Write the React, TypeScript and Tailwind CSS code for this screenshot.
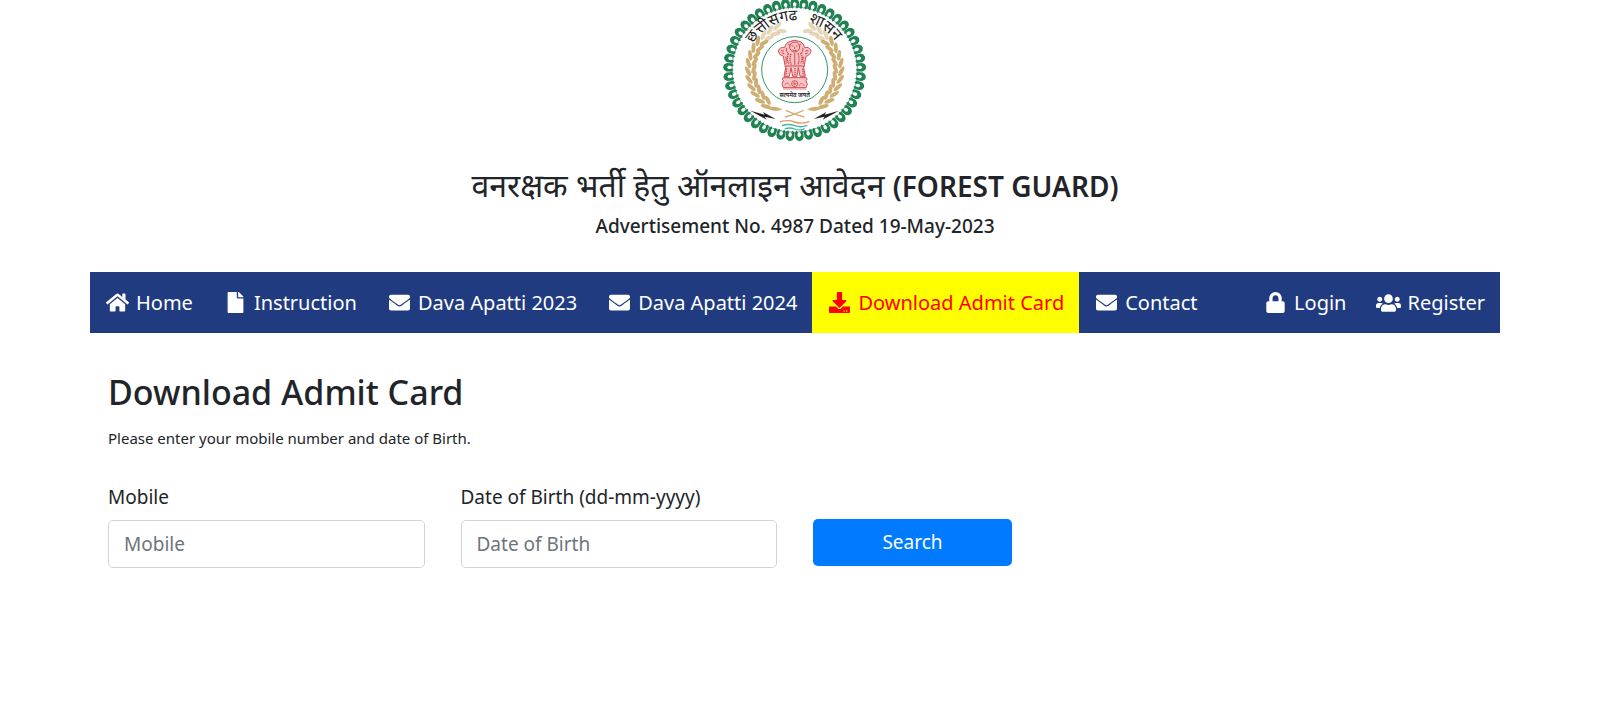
import type { ReactNode } from "react";
import { FaDownload, FaEnvelope, FaFile, FaHome, FaLock, FaUsers } from "react-icons/fa";

const SCALLOPS = Array.from({ length: 45 }, (_, i) => i * 8);
const LEAVES = Array.from({ length: 13 }, (_, i) => 218 + i * 10);

function WheatBranch() {
  return (
    <g fill="#cfae74">
      {LEAVES.map((angle, i) => (
        <g key={angle} transform={`rotate(${angle} 241 209)`} opacity={i > 9 ? 0.5 : 1}>
          <ellipse cx="241" cy="69" rx="16" ry="6" transform="rotate(-26 241 69)" />
          <ellipse cx="248" cy="87" rx="15" ry="6" transform="rotate(24 248 87)" />
        </g>
      ))}
      <path d="M158 325 Q180 314 204 328 Q182 339 158 325Z" />
      <path d="M212 351 Q240 344 268 331" fill="none" stroke="#cfae74" strokeWidth="4" />
    </g>
  );
}

function LionCapital() {
  return (
    <g fill="#f6c4c4" stroke="#d5484f" strokeWidth="3" strokeLinejoin="round">
      <path d="M211 143 Q196 140 192 153 Q194 166 207 169 L213 201 H269 L275 169 Q289 165 290 151 Q283 138 270 142 Q267 126 253 124 Q241 117 229 124 Q214 127 211 143Z" />
      <path d="M215 198 L209 229 H225 L230 203 L235 229 H248 L252 203 L257 229 H273 L267 198Z" />
      <circle cx="241" cy="141" r="15" />
      <path d="M232 138h5m8 0h5M241 140v7m-7 3q7 5 14 0M216 144q-2 12 8 19M266 144q2 12-8 19M200 152l9 1m73-1-9 1M202 159l8 2m70-2-8 2M222 131l5 6m33-6-5 6" fill="none" />
      <path d="M222 161q-7 18 2 31m6-31q-6 18 1 34m10-35v36m10-36q6 17 0 34m8-35q8 17 0 31M214 170q3 9 1 21m53-21q-3 9-1 21M217 206l-2 20m27-22v22m23-20 2 20" fill="none" strokeWidth="4" strokeDasharray="4 2" />
      <path d="M206 233 Q201 237 207 242 Q199 253 207 263 H275 Q283 253 275 242 Q281 237 276 233Z" />
      <circle cx="241" cy="251" r="9" fill="#fff" />
      <path d="M241 242v18m-9-9h18m-15-6 12 12m0-12-12 12M212 256q3-11 9-6 5 4 7 8m26 0q4-12 9-7 5 2 7 7M206 267H276" fill="none" strokeWidth="2" />
    </g>
  );
}

function StateEmblem() {
  return (
    <svg viewBox="2 0 480 435" className="h-[145px] w-40" role="img" aria-label="छत्तीसगढ़ शासन">
      <defs>
        <path id="motto-arc" d="M93 209 A148 148 0 0 1 389 209" />
      </defs>
      <circle cx="241" cy="209" r="188" fill="none" stroke="#5fae88" strokeWidth="3" />
      {SCALLOPS.map((angle) => (
        <path
          key={angle}
          transform={`rotate(${angle} 241 209)`}
          d="M228 20 V5 L233 -3 L241 -6 L249 -3 L254 5 V20 L248 26 L244 20 L246 15 V10 L241 6 L236 10 V15 L238 20 L234 26Z"
          fill="#208252"
        />
      ))}
      <WheatBranch />
      <g transform="translate(482 0) scale(-1 1)">
        <WheatBranch />
      </g>
      <g fill="#222" fontSize="46" fontFamily="'Noto Sans Devanagari', 'Noto Sans', sans-serif">
        <text>
          <textPath href="#motto-arc" startOffset="82">छत्तीसगढ</textPath>
        </text>
        <text>
          <textPath href="#motto-arc" startOffset="274">शासन</textPath>
        </text>
      </g>
      <circle cx="241" cy="209" r="99" fill="#fff" stroke="#359469" strokeWidth="3" />
      <LionCapital />
      <text x="241" y="290" textAnchor="middle" fontSize="18" fontWeight="600" fill="#222" fontFamily="'Noto Sans Devanagari', 'Noto Sans', sans-serif">
        सत्यमेव जयते
      </text>
      <path d="M108 332 L151 344 L146 336 L184 357 L151 350 L157 359Z" fill="#222" />
      <path d="M374 332 L331 344 L336 336 L298 357 L331 350 L325 359Z" fill="#222" />
      <path d="M197 366 Q219 358 241 366 T285 364" fill="none" stroke="#e79b6b" strokeWidth="4" />
      <path d="M203 377 Q222 370 241 377 T279 376 M211 387 Q226 381 241 387 T271 386" fill="none" stroke="#45b5a5" strokeWidth="4" />
    </svg>
  );
}

type NavItemProps = {
  icon: ReactNode;
  label: string;
  active?: boolean;
};

function NavItem({ icon, label, active = false }: NavItemProps) {
  return (
    <li>
      <a
        href="#"
        aria-current={active ? "page" : undefined}
        className={
          active
            ? "flex h-[61px] items-center gap-[6px] bg-[#ffff00] px-[15px] text-[#ff0000]"
            : "flex h-[61px] items-center gap-[6px] px-[15px] text-white"
        }
      >
        <span className="flex w-[25px] justify-center">{icon}</span>
        {label}
      </a>
    </li>
  );
}

export default function App() {
  return (
    <div className="pr-[10px] font-['Noto_Sans','Noto_Sans_Devanagari',sans-serif] text-[#212529]">
      <div className="mx-auto max-w-[1410px]">
        <header className="flex flex-col items-center">
          <StateEmblem />
          <h1 className="mt-[18px] text-[32px] leading-[44px] font-normal">
            वनरक्षक भर्ती हेतु ऑनलाइन आवेदन <span className="text-[28px] font-semibold">(FOREST GUARD)</span>
          </h1>
          <h2 className="text-[19px] leading-9 font-medium">Advertisement No. 4987 Dated 19-May-2023</h2>
        </header>

        <nav className="mt-7 flex justify-between bg-[#203b80] text-[20px] whitespace-nowrap">
          <ul className="flex">
            <NavItem icon={<FaHome size={23} />} label="Home" />
            <NavItem icon={<FaFile size={21} />} label="Instruction" />
            <NavItem icon={<FaEnvelope size={21} />} label="Dava Apatti 2023" />
            <NavItem icon={<FaEnvelope size={21} />} label="Dava Apatti 2024" />
            <NavItem icon={<FaDownload size={21} />} label="Download Admit Card" active />
            <NavItem icon={<FaEnvelope size={21} />} label="Contact" />
          </ul>
          <ul className="flex">
            <NavItem icon={<FaLock size={21} />} label="Login" />
            <NavItem icon={<FaUsers size={26} />} label="Register" />
          </ul>
        </nav>

        <main className="pt-[37px]">
          <div className="px-[18px]">
            <h3 className="text-[34px] leading-[44px] font-medium">Download Admit Card</h3>
            <p className="mt-3 text-[15px] leading-6">Please enter your mobile number and date of Birth.</p>
          </div>
          <form className="mt-8 grid grid-cols-12 items-end text-[19px]" onSubmit={(e) => e.preventDefault()}>
            <div className="col-span-3 px-[18px]">
              <label htmlFor="mobile" className="mb-2 block leading-[30px]">
                Mobile
              </label>
              <input
                id="mobile"
                type="text"
                placeholder="Mobile"
                className="block h-12 w-full rounded-[5px] border border-[#ced4da] px-[15px] placeholder:text-[#6c757d]"
              />
            </div>
            <div className="col-span-3 px-[18px]">
              <label htmlFor="dob" className="mb-2 block leading-[30px]">
                Date of Birth (dd-mm-yyyy)
              </label>
              <input
                id="dob"
                type="text"
                placeholder="Date of Birth"
                className="block h-12 w-full rounded-[5px] border border-[#ced4da] px-[15px] placeholder:text-[#6c757d]"
              />
            </div>
            <div className="col-span-2 px-[18px]">
              <button type="submit" className="mb-0.5 block h-[47px] w-full rounded-[5px] bg-[#007bff] text-white">
                Search
              </button>
            </div>
          </form>
        </main>
      </div>
    </div>
  );
}
